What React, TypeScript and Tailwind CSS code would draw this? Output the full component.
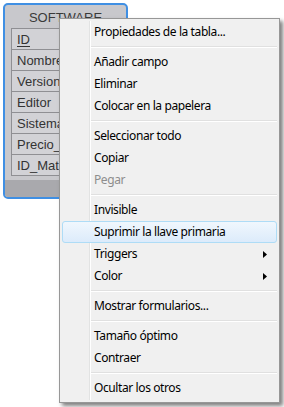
import React from "react";

type Item = { label: string; disabled?: boolean; sub?: boolean; hl?: boolean } | "sep";

const items: Item[] = [
  { label: "Propiedades de la tabla..." },
  "sep",
  { label: "Añadir campo" },
  { label: "Eliminar" },
  { label: "Colocar en la papelera" },
  "sep",
  { label: "Seleccionar todo" },
  { label: "Copiar" },
  { label: "Pegar", disabled: true },
  "sep",
  { label: "Invisible" },
  { label: "Suprimir la llave primaria", hl: true },
  { label: "Triggers", sub: true },
  { label: "Color", sub: true },
  "sep",
  { label: "Mostrar formularios..." },
  "sep",
  { label: "Tamaño óptimo" },
  { label: "Contraer" },
  "sep",
  { label: "Ocultar los otros" },
];

const fields = ["ID", "Nombre", "Version", "Editor", "Sistema", "Precio_", "ID_Mate"];

export default function App() {
  return (
    <div className="relative w-[284px] h-[407px] bg-white overflow-hidden">
      {/* table window */}
      <div className="ml-[3px] mt-[3px] w-[125px] h-[196px] border-2 border-[#3f8fe3] rounded-[5px] bg-[#c8c8cc] flex flex-col overflow-hidden"
        style={{ fontFamily: '"Liberation Sans", Arial, sans-serif' }}>
        <div className="h-[23px] flex items-center justify-center text-[13px] text-[#3a3a3a] pt-[2px]">SOFTWARE</div>
        <div className="ml-[6px] border-l border-b border-[#8f8f93]">
          {fields.map((f, i) => (
            <div key={f} className="h-[21px] border-t border-[#8f8f93] bg-[#d2d2d6] flex items-center pl-[5px] text-[13px] text-[#333] leading-none">
              <span className={i === 0 ? "underline underline-offset-2" : ""}>{f}</span>
            </div>
          ))}
        </div>
        <div className="h-[4px]" />
        <div className="flex-1 bg-[#a9a9ad]" />
      </div>

      {/* context menu */}
      <div
        className="absolute left-[59px] top-[18px] w-[221px] h-[385px] border border-[#979797] bg-[#f0f0f0] pt-[2px] shadow-[3px_3px_4px_rgba(0,0,0,0.5)]"
        style={{ fontFamily: '"Noto Sans", "Open Sans", sans-serif' }}
      >
        <div className="absolute left-[29px] top-[2px] bottom-[2px] w-[2px] border-l border-[#e2e3e3] bg-[#f0f0f0] border-r border-r-white" />
        <div className="relative flex flex-col">
          {items.map((it, i) =>
            it === "sep" ? (
              <div key={i} className="h-[8px] flex flex-col justify-center ml-[31px] mr-[2px]">
                <div className="h-[1px] bg-[#e0e0e0]" />
                <div className="h-[1px] bg-white" />
              </div>
            ) : (
              <div
                key={i}
                className={
                  "h-[22px] mx-[2px] flex items-center pl-[31px] pr-[8px] text-[12px] rounded-[3px] border " +
                  (it.hl
                    ? "border-[#aedcf6] bg-gradient-to-b from-[#f0f7fd] to-[#dcebfb]"
                    : "border-transparent") +
                  (it.disabled ? " text-[#8d8d8d]" : " text-black")
                }
              >
                <span className="flex-1 tracking-[-0.4px]">{it.label}</span>
                {it.sub && (
                  <svg width="4" height="7" viewBox="0 0 4 7" className="mr-[1px]">
                    <path d="M0 0 L4 3.5 L0 7 Z" fill="#000" />
                  </svg>
                )}
              </div>
            )
          )}
        </div>
      </div>
    </div>
  );
}
